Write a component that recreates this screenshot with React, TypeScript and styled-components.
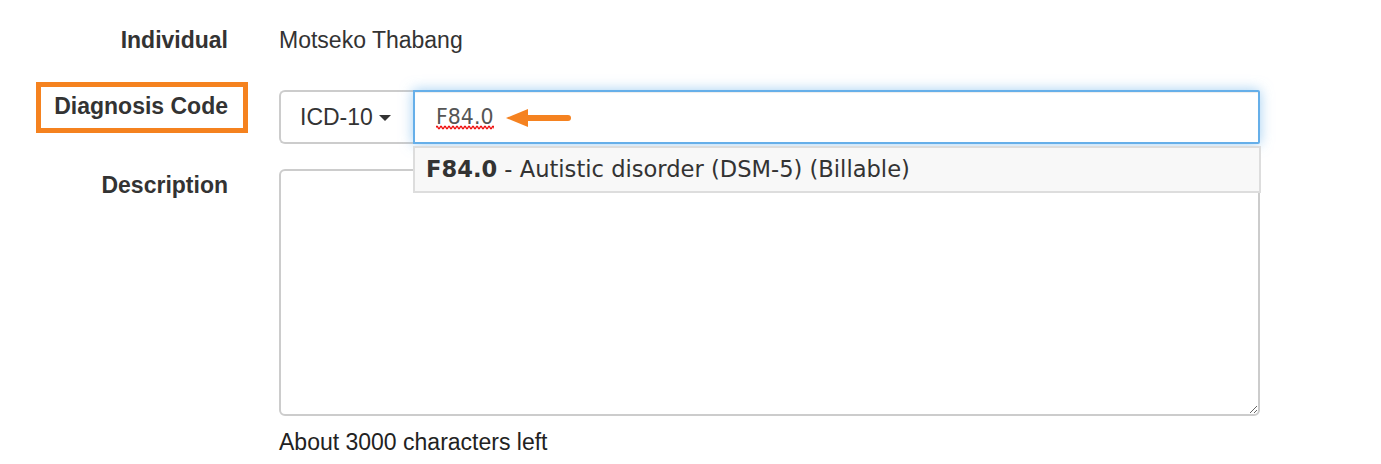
import React from "react";
import styled, { createGlobalStyle } from "styled-components";

const GlobalStyle = createGlobalStyle`
  html, body { margin: 0; padding: 0; background: #fff; }
  body { font-family: "Liberation Sans", Arial, sans-serif; color: #333; }
  * { box-sizing: border-box; }
`;

const Page = styled.form`
  width: 1381px;
  height: 464px;
  padding: 16px 0 0 36px;
  display: flex;
  flex-direction: column;
  overflow: hidden;
`;

const Row = styled.div<{ $space: number }>`
  display: grid;
  grid-template-columns: 212px 981px;
  column-gap: 31px;
  align-items: start;
  margin-top: ${(p) => p.$space}px;
`;

const Label = styled.label<{ $highlight?: boolean }>`
  display: block;
  border: 5px solid ${(p) => (p.$highlight ? "#f5821f" : "transparent")};
  padding: 3px 15px 6px 10px;
  text-align: right;
  font-weight: bold;
  font-size: 23px;
  line-height: 32px;
  color: #333;
  white-space: nowrap;
`;

const Cell = styled.div`
  padding-top: 8px;
  position: relative;
`;

const StaticValue = styled.p`
  margin: 0;
  font-size: 23px;
  line-height: 32px;
  color: #333;
`;

const InputGroup = styled.div`
  display: flex;
  height: 54px;
`;

const AddonButton = styled.button`
  display: flex;
  align-items: center;
  height: 54px;
  width: 134px;
  padding: 0 0 0 19px;
  background: #fff;
  border: 2px solid #ccc;
  border-right: none;
  border-radius: 6px 0 0 6px;
  font-family: "Liberation Sans", Arial, sans-serif;
  font-size: 23px;
  color: #333;
  cursor: pointer;
`;

const Caret = styled.span`
  display: inline-block;
  width: 0;
  height: 0;
  margin-left: 6px;
  margin-top: 2px;
  border-top: 6.5px solid #333;
  border-left: 6.5px solid transparent;
  border-right: 6.5px solid transparent;
`;

const InputWrap = styled.div`
  position: relative;
  flex: 1;
`;

const CodeInput = styled.input`
  display: block;
  width: 100%;
  height: 54px;
  padding: 0 21px;
  border: 2px solid #66afe9;
  border-radius: 0 2px 2px 0;
  outline: none;
  box-shadow: inset 0 1px 1px rgba(0, 0, 0, 0.075), 0 0 13px rgba(102, 175, 233, 0.6);
  font-family: "DejaVu Sans", Verdana, sans-serif;
  font-size: 20.5px;
  color: #555;
`;

const SpellMark = styled.svg`
  position: absolute;
  left: 23px;
  top: 35px;
  pointer-events: none;
`;

const Arrow = styled.svg`
  position: absolute;
  left: 93px;
  top: 18px;
  pointer-events: none;
`;

const Suggestions = styled.ul`
  position: absolute;
  z-index: 2;
  top: calc(100% + 2px);
  left: 0;
  right: -1px;
  margin: 0;
  padding: 0;
  list-style: none;
  background: #f8f8f8;
  border: 2px solid #ddd;
`;

const Suggestion = styled.li`
  padding: 5px 11px 6px 11px;
  font-family: "DejaVu Sans", Verdana, sans-serif;
  font-size: 22.6px;
  line-height: 32px;
  color: #333;
  white-space: nowrap;
  strong {
    font-weight: bold;
  }
`;

const TextArea = styled.textarea`
  display: block;
  width: 981px;
  height: 247px;
  padding: 10px 19px;
  border: 2px solid #ccc;
  border-radius: 6px;
  resize: both;
  font-family: "Liberation Sans", Arial, sans-serif;
  font-size: 23px;
  color: #555;
  outline: none;
`;

const HelpText = styled.p`
  margin: 10px 0 0;
  font-size: 23px;
  line-height: 32px;
  color: #222;
`;

const wave = Array.from({ length: 15 }, () => "q1 -2.4 2 0 q1 2.4 2 0").join(" ");

export default function App() {
  return (
    <>
      <GlobalStyle />
      <Page onSubmit={(e) => e.preventDefault()}>
        <Row $space={0}>
          <Label>Individual</Label>
          <Cell>
            <StaticValue>Motseko Thabang</StaticValue>
          </Cell>
        </Row>
        <Row $space={15}>
          <Label $highlight>Diagnosis Code</Label>
          <Cell>
            <InputGroup>
              <AddonButton type="button">
                ICD-10
                <Caret />
              </AddonButton>
              <InputWrap>
                <CodeInput readOnly value="F84.0" />
                <SpellMark width="58" height="5" viewBox="0 0 58 5">
                  <path d={`M0 2.5 ${wave}`} fill="none" stroke="#f01010" strokeWidth="1.4" />
                </SpellMark>
                <Arrow width="66" height="20" viewBox="0 0 66 20">
                  <polygon points="0,10 22,1 22,19" fill="#f58220" />
                  <line x1="20" y1="10" x2="62" y2="10" stroke="#f58220" strokeWidth="6" strokeLinecap="round" />
                </Arrow>
                <Suggestions>
                  <Suggestion>
                    <strong>F84.0</strong> - Autistic disorder (DSM-5) (Billable)
                  </Suggestion>
                </Suggestions>
              </InputWrap>
            </InputGroup>
          </Cell>
        </Row>
        <Row $space={17}>
          <Label>Description</Label>
          <Cell>
            <TextArea />
            <HelpText>About 3000 characters left</HelpText>
          </Cell>
        </Row>
      </Page>
    </>
  );
}
